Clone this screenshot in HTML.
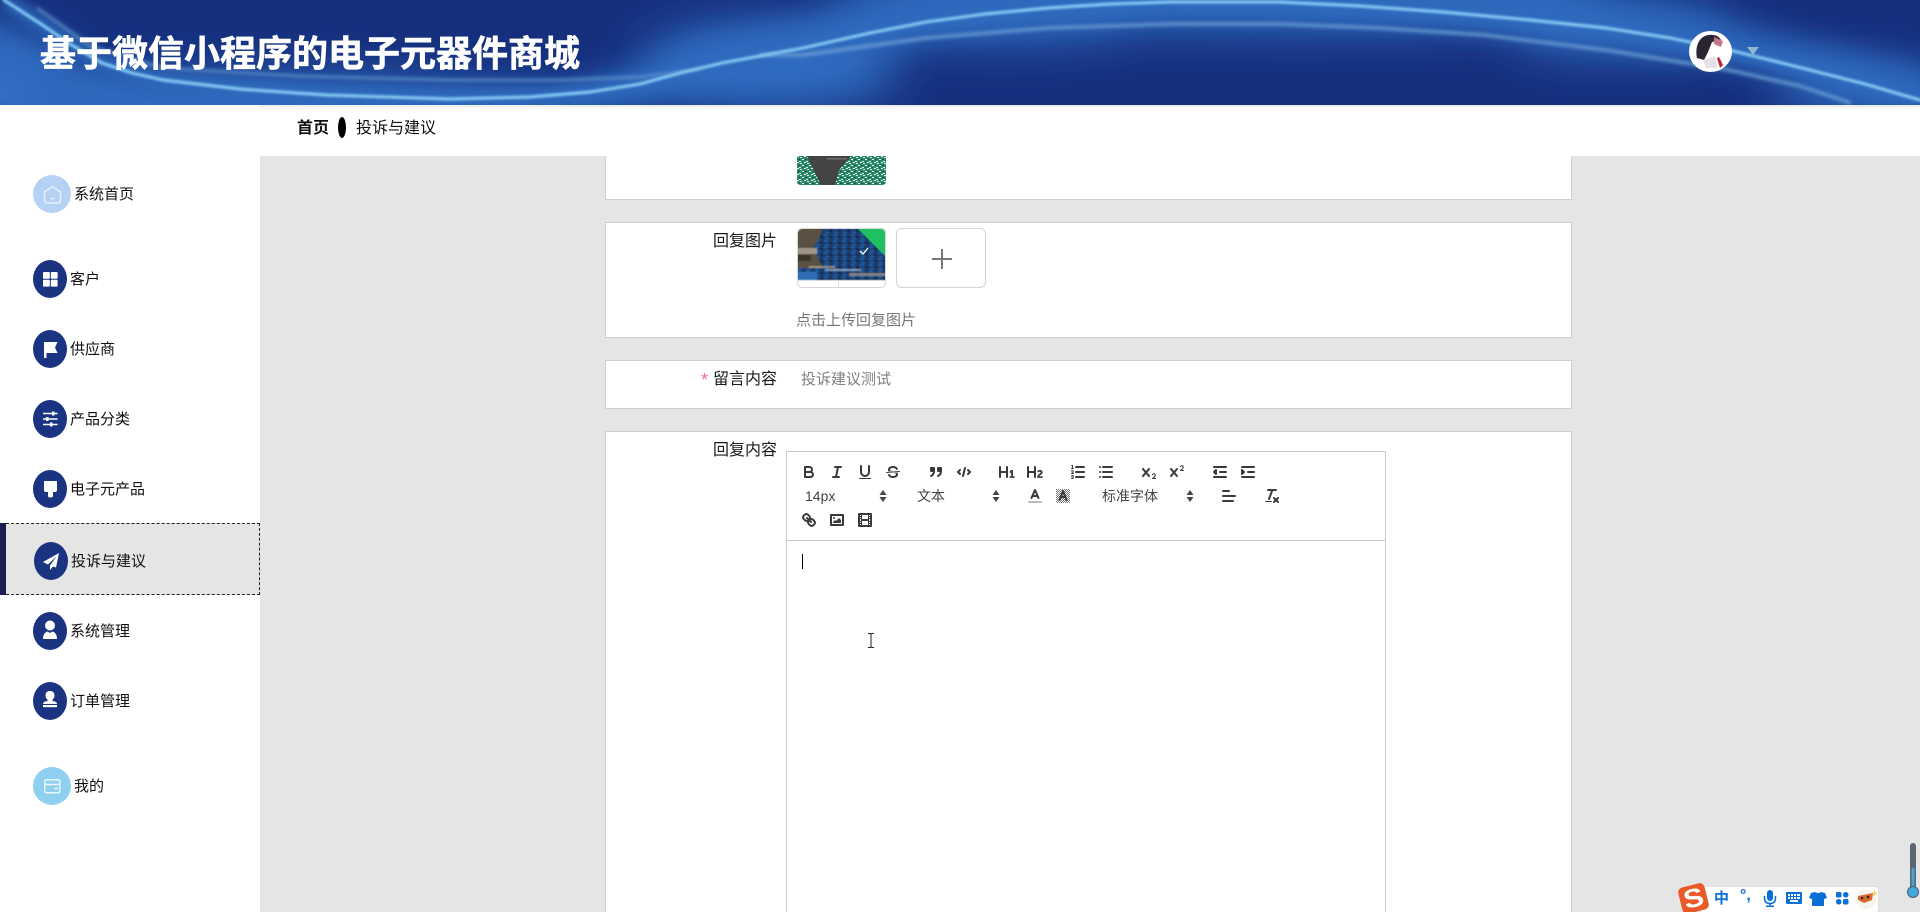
<!DOCTYPE html>
<html lang="zh-CN">
<head>
<meta charset="utf-8">
<title>基于微信小程序的电子元器件商城</title>
<style>
html,body{margin:0;padding:0;width:1920px;height:912px;overflow:hidden;background:#fff}
body{position:relative;font-family:"Liberation Sans","Noto Sans CJK SC",sans-serif;color:#111}
.a{position:absolute}
.t{position:absolute;white-space:nowrap;line-height:20px;height:20px}
.side{font-size:15px;color:#111}
.lab{font-size:16px;color:#1a1a1a;left:713px}
.card{position:absolute;left:605px;width:965px;background:#fff;border:1px solid #cfcfcf;box-sizing:content-box}
.q{position:absolute;width:18px;height:18px;fill:none;stroke:#3a3a3a;stroke-width:2;stroke-linecap:round;stroke-linejoin:round}
.q .f{fill:#3a3a3a;stroke:none}
.q .n{stroke-width:1}
.q .fs{fill:#3a3a3a}
.pick{position:absolute;font-size:14px;line-height:20px;color:#444;white-space:nowrap}
</style>
</head>
<body>

<!-- header -->
<svg class="a" style="left:0;top:0" width="1920" height="105" viewBox="0 0 1920 105">
<defs>
<filter id="b40" filterUnits="userSpaceOnUse" x="-300" y="-300" width="2520" height="705"><feGaussianBlur stdDeviation="24"/></filter>
<filter id="b30" filterUnits="userSpaceOnUse" x="-200" y="-200" width="2320" height="505"><feGaussianBlur stdDeviation="15"/></filter>
<filter id="b8" filterUnits="userSpaceOnUse" x="-200" y="-200" width="2320" height="505"><feGaussianBlur stdDeviation="6"/></filter>
<filter id="b1" filterUnits="userSpaceOnUse" x="-200" y="-200" width="2320" height="505"><feGaussianBlur stdDeviation="1"/></filter>
<filter id="b2" filterUnits="userSpaceOnUse" x="-200" y="-200" width="2320" height="505"><feGaussianBlur stdDeviation="1.500"/></filter>
</defs>
<rect width="1920" height="105" fill="#162f7d"/>
<g filter="url(#b40)" fill="#3170c6">
<ellipse cx="230" cy="112" rx="330" ry="34"/>
<ellipse cx="-10" cy="70" rx="70" ry="40"/>
<ellipse cx="770" cy="66" rx="130" ry="42"/>
<ellipse cx="1000" cy="10" rx="170" ry="30"/>
<ellipse cx="1300" cy="-2" rx="300" ry="30"/>
<ellipse cx="1620" cy="30" rx="110" ry="22"/>
<ellipse cx="1860" cy="92" rx="90" ry="22"/>
</g>
<polyline filter="url(#b30)" fill="none" stroke="#2f6ac0" stroke-width="36" stroke-linejoin="round" points="-40,40 60,82 163,108 326,118 449,118 560,108 640,86 722,60 803,42 926,12 1048,-2 1170,-8 1280,-8 1443,2 1606,20 1729,42 1810,62 1940,98"/>
<polyline filter="url(#b8)" fill="none" stroke="#2f6abd" stroke-width="14" stroke-linejoin="round" points="4,0 41,24 102,63 163,80 326,95 449,99 530,97 640,84 722,63 803,48 926,22 1048,8 1170,2 1280,2 1443,12 1606,28 1729,50 1810,70 1920,100"/>
<polyline filter="url(#b2)" fill="none" stroke="#6b9fd3" stroke-opacity=".65" stroke-width="3" stroke-linejoin="round" points="37,8 90,46 163,68 300,76 449,80 560,80 640,77 700,69"/>
<polyline filter="url(#b2)" fill="none" stroke="#6fa2d6" stroke-opacity=".75" stroke-width="4" stroke-linejoin="round" points="760,55 803,55 926,38 1048,28 1170,24 1280,24 1380,28 1484,35 1606,50 1729,70 1800,86 1851,103"/>
<polyline filter="url(#b1)" fill="none" stroke="#7fc4f0" stroke-width="3.400" stroke-linecap="round" stroke-linejoin="round" points="4,0 24,13 41,24 70,44 102,63 132,73 163,80 240,89 326,95 449,99 530,97 590,92 640,84 680,73 722,63 803,48 870,33 926,22 985,14 1048,8 1110,4 1170,2 1280,2 1360,6 1443,12 1530,20 1606,28 1670,38 1729,50 1770,60 1810,70 1865,84 1920,100"/>
<polygon points="1747,47 1759,47 1753,55" fill="#8cb6d2"/>
<ellipse cx="1710.500" cy="51.500" rx="21.500" ry="20.500" fill="#fff"/>
<path d="M1697,58 C1695,48 1698,37 1708,35 C1714,34 1719,36 1721,40 L1712,42 L1708,52 L1704,60Z" fill="#2a2530"/>
<path d="M1714,37 L1723,41 L1721,47 L1714,44Z" fill="#c9768a"/>
<path d="M1717,58 L1720,68 L1723,65 L1719,57Z" fill="#c22030"/>
<path d="M1703,60 L1715,56 L1717,68 L1706,68Z" fill="#e6e1e6"/>
</svg>
<div class="t" style="left:40px;top:32px;height:44px;line-height:44px;font-size:36px;font-weight:700;color:#fff;-webkit-text-stroke:.6px #fff">基于微信小程序的电子元器件商城</div>

<!-- sidebar / breadcrumb / main -->
<div class="a" style="left:0;top:105px;width:260px;height:807px;background:#fff"></div>
<div class="a" style="left:260px;top:105px;width:1660px;height:51px;background:#fff"></div>
<div class="a" style="left:260px;top:105px;width:1660px;height:4px;background:linear-gradient(#e8e9ee,#fff)"></div>
<div class="a" style="left:260px;top:156px;width:1660px;height:756px;background:#e5e5e5"></div>

<div class="t" style="left:297px;top:119px;font-size:16px;font-weight:700;color:#111">首页</div>
<div class="a" style="left:338px;top:117px;width:8px;height:21px;border-radius:50%;background:#000"></div>
<div class="t" style="left:356px;top:119px;font-size:16px;color:#111">投诉与建议</div>

<!-- active item -->
<div class="a" style="left:0;top:523px;width:6px;height:72px;background:#1a1f4e"></div>
<div class="a" style="left:6px;top:523px;width:254px;height:72px;box-sizing:border-box;background:#e5e6e3;border:1px dashed #222;border-left:none"></div>

<!-- sidebar circles and icons -->
<svg class="a" style="left:0;top:160px" width="260" height="660" viewBox="0 160 260 660">
<circle cx="52" cy="194" r="19" fill="#b5d1f3"/>
<path d="M44.500,192 L52.500,186.500 L60.500,192 V200 Q60.500,203 57.500,203 H47.500 Q44.500,203 44.500,200Z" fill="none" stroke="#e6f0fc" stroke-width="1.500"/>
<path d="M50.500,198.500 H54.500" stroke="#e6f0fc" stroke-width="1.500"/>

<ellipse cx="50" cy="279" rx="17" ry="19" fill="#1a3482"/>
<g fill="#fff"><rect x="43" y="272" width="6.800" height="6.800" rx=".8"/><rect x="50.800" y="272" width="6.800" height="6.800" rx=".8"/><rect x="43" y="279.800" width="6.800" height="6.800" rx=".8"/><rect x="50.800" y="279.800" width="6.800" height="6.800" rx=".8"/></g>

<ellipse cx="50" cy="349" rx="17" ry="19" fill="#1a3482"/>
<path d="M44,342 H57.500 L55,347.500 L57.500,353 H46.500 V358 H44Z" fill="#fff"/>

<ellipse cx="50" cy="419" rx="17" ry="19" fill="#1a3482"/>
<g stroke="#fff" stroke-width="1.600"><path d="M43,413.500 H57.500 M43,419 H57.500 M43,424.500 H57.500"/></g>
<g fill="#fff"><rect x="52" y="411.500" width="2.500" height="4"/><rect x="46" y="417" width="2.500" height="4"/><rect x="50" y="422.500" width="2.500" height="4"/></g>

<ellipse cx="50" cy="489" rx="17" ry="19" fill="#1a3482"/>
<path d="M44,481 H57 V490 Q57,492 55,492 H53 V496 Q53,497.500 50.500,497.500 Q48,497.500 48,496 V492 H46 Q44,492 44,490Z" fill="#fff"/>

<ellipse cx="51" cy="561" rx="17" ry="19" fill="#1a3482"/>
<path d="M59,553 L43,562 L48,564.500 L56.500,556.500 L50,565.500 V570 L53,566.500 L56,567.500Z" fill="#fff"/>

<ellipse cx="50" cy="631" rx="17" ry="19" fill="#1a3482"/>
<circle cx="50" cy="625.500" r="5" fill="#fff"/>
<path d="M43,639 Q43,633 47.500,631.500 L50,633 L52.500,631.500 Q57,633 57,639Z" fill="#fff"/>

<ellipse cx="50" cy="701" rx="17" ry="19" fill="#1a3482"/>
<path d="M50,691 Q54.500,691 54.500,695.500 Q54.500,698 52.500,699.500 V701 Q57,701.500 57,704 H43 Q43,701.500 47.500,701 V699.500 Q45.500,698 45.500,695.500 Q45.500,691 50,691Z" fill="#fff"/>
<rect x="43" y="705" width="14" height="2.200" fill="#fff"/>

<circle cx="52" cy="786" r="19" fill="#8fd0f0"/>
<rect x="44.800" y="779.800" width="15" height="13" rx="1.500" fill="none" stroke="#e9f6fd" stroke-width="1.500"/>
<path d="M44.800,784.500 H59.800 M54,788.500 H58" stroke="#e9f6fd" stroke-width="1.500"/>
</svg>

<div class="t side" style="left:74px;top:185px">系统首页</div>
<div class="t side" style="left:70px;top:270px">客户</div>
<div class="t side" style="left:70px;top:340px">供应商</div>
<div class="t side" style="left:70px;top:410px">产品分类</div>
<div class="t side" style="left:70px;top:480px">电子元产品</div>
<div class="t side" style="left:71px;top:552px">投诉与建议</div>
<div class="t side" style="left:70px;top:622px">系统管理</div>
<div class="t side" style="left:70px;top:692px">订单管理</div>
<div class="t side" style="left:74px;top:777px">我的</div>

<!-- cards -->
<div class="card" style="top:156px;height:43px;border-top:none"></div>
<div class="card" style="top:222px;height:114px"></div>
<div class="card" style="top:360px;height:47px"></div>
<div class="card" style="top:431px;height:490px"></div>

<!-- image one -->
<svg class="a" style="left:797px;top:156px" width="89" height="29" viewBox="0 0 89 29">
<defs>
<pattern id="noise" width="7" height="6" patternUnits="userSpaceOnUse">
<rect width="7" height="6" fill="#2b8a6c"/>
<rect x="0" y="0" width="2" height="1" fill="#e6f2ec"/><rect x="3" y="1" width="2" height="1" fill="#d6ece2"/><rect x="5" y="3" width="2" height="1" fill="#fff"/><rect x="1" y="3" width="2" height="1" fill="#0f5a45"/><rect x="2" y="5" width="2" height="1" fill="#e6f2ec"/><rect x="5" y="5" width="1" height="1" fill="#0f5a45"/>
</pattern>
<clipPath id="c1"><path d="M0,0 H89 V25 Q89,29 85,29 H4 Q0,29 0,25Z"/></clipPath>
</defs>
<g clip-path="url(#c1)">
<rect width="89" height="29" fill="url(#noise)"/>
<polygon points="10,0 54,0 42,14 38,29 24,29" fill="#444444"/>
<rect x="30" y="2" width="20" height="1.500" fill="#8b8b8b" opacity=".6"/>
</g>
</svg>

<!-- image two -->
<svg class="a" style="left:797px;top:228px" width="89" height="60" viewBox="0 0 89 60">
<defs>
<pattern id="blue" width="9" height="6" patternUnits="userSpaceOnUse">
<rect width="9" height="6" fill="#1c3c6a"/>
<rect x="0" y="0" width="4" height="2" fill="#1b5ea8"/><rect x="5" y="2" width="3" height="2" fill="#16294a"/><rect x="1" y="4" width="4" height="1" fill="#2268b8"/>
</pattern>
<clipPath id="c2"><rect width="89" height="60" rx="5"/></clipPath>
<filter id="soft2" x="-5%" y="-5%" width="110%" height="110%"><feGaussianBlur stdDeviation=".6"/></filter>
</defs>
<g clip-path="url(#c2)">
<rect width="89" height="60" fill="#fff"/>
<g filter="url(#soft2)">
<rect width="89" height="52" fill="url(#blue)"/>
<path d="M0,0 H26 L22,10 L16,20 L26,40 H0Z" fill="#5a5142"/>
<rect x="0" y="20" width="20" height="6" fill="#a09585"/>
<rect x="0" y="27" width="14" height="6" fill="#3b352c"/>
<rect x="12" y="38" width="26" height="2" fill="#b9ab90" opacity=".7"/>
<rect x="28" y="41" width="36" height="2" fill="#a5b4c4" opacity=".7"/>
<rect x="0" y="44" width="20" height="8" fill="#2d6db5"/>
<rect x="52" y="45" width="37" height="3" fill="#a59a8c" opacity=".7"/>
</g>
<polygon points="60,0 89,0 89,29" fill="#1fbf62"/>
<path d="M63,23 L66,26 L71,20" fill="none" stroke="#fff" stroke-width="1.300"/>
<rect x="41" y="52" width="1" height="8" fill="#ddd"/>
</g>
<rect x=".5" y=".5" width="88" height="59" rx="5" fill="none" stroke="#d8d8d8"/>
</svg>

<!-- add box -->
<div class="a" style="left:896px;top:228px;width:90px;height:60px;box-sizing:border-box;border:1px solid #d4d4d4;border-radius:6px;background:#fff"></div>
<div class="a" style="left:932px;top:258px;width:20px;height:1.500px;background:#777"></div>
<div class="a" style="left:941px;top:249px;width:1.500px;height:20px;background:#777"></div>

<div class="t lab" style="top:232px">回复图片</div>
<div class="t" style="left:796px;top:311px;font-size:15px;color:#777">点击上传回复图片</div>
<div class="t" style="left:701px;top:370px;font-size:18px;color:#f56c8c">*</div>
<div class="t lab" style="top:370px">留言内容</div>
<div class="t" style="left:801px;top:370px;font-size:15px;color:#808080">投诉建议测试</div>
<div class="t lab" style="top:441px">回复内容</div>

<!-- editor -->
<div class="a" style="left:786px;top:451px;width:600px;height:90px;box-sizing:border-box;border:1px solid #ccc;background:#fff"></div>
<div class="a" style="left:786px;top:540px;width:600px;height:380px;box-sizing:border-box;border:1px solid #ccc;background:#fff"></div>
<div class="a" style="left:802px;top:554px;width:1px;height:15px;background:#000"></div>

<!-- row 1 -->
<svg class="q" style="left:800px;top:463px" viewBox="0 0 18 18"><path d="M5,4H9.5A2.5,2.5,0,0,1,12,6.5v0A2.5,2.5,0,0,1,9.5,9H5A0,0,0,0,1,5,9V4A0,0,0,0,1,5,4Z"/><path d="M5,9h5.5A2.5,2.5,0,0,1,13,11.5v0A2.5,2.5,0,0,1,10.5,14H5a0,0,0,0,1,0,0V9A0,0,0,0,1,5,9Z"/></svg>
<svg class="q" style="left:828px;top:463px" viewBox="0 0 18 18"><line x1="7" x2="13" y1="4" y2="4"/><line x1="5" x2="11" y1="14" y2="14"/><line x1="8" x2="10" y1="14" y2="4"/></svg>
<svg class="q" style="left:856px;top:463px" viewBox="0 0 18 18"><path d="M5,3V9a4.012,4.012,0,0,0,4,4H9a4.012,4.012,0,0,0,4-4V3"/><rect class="f" height="1" rx="0.5" ry="0.5" width="12" x="3" y="15"/></svg>
<svg class="q" style="left:884px;top:463px" viewBox="0 0 18 18"><line class="n" x1="15.5" x2="2.5" y1="8.5" y2="9.5"/><path class="f" d="M9.007,8C6.542,7.791,6,7.519,6,6.5,6,5.792,7.283,5,9,5c1.571,0,2.765.679,2.969,1.309a1,1,0,0,0,1.9-.617C13.356,4.106,11.354,3,9,3,6.2,3,4,4.538,4,6.5a3.2,3.2,0,0,0,.5,1.843Z"/><path class="f" d="M8.984,10C11.457,10.208,12,10.479,12,11.5c0,.708-1.283,1.5-3,1.5-1.571,0-2.765-.679-2.969-1.309a1,1,0,1,0-1.9.617C4.644,13.894,6.646,15,9,15c2.8,0,5-1.538,5-3.5a3.2,3.2,0,0,0-.5-1.843Z"/></svg>
<svg class="q" style="left:927px;top:463px" viewBox="0 0 18 18"><rect class="fs" height="3" width="3" x="4" y="5"/><rect class="fs" height="3" width="3" x="11" y="5"/><path d="M7,8c0,4.031-3,5-3,5"/><path d="M14,8c0,4.031-3,5-3,5"/></svg>
<svg class="q" style="left:955px;top:463px" viewBox="0 0 18 18"><polyline points="5 7 3 9 5 11"/><polyline points="13 7 15 9 13 11"/><line x1="10" x2="8" y1="5" y2="13"/></svg>
<svg class="q" style="left:998px;top:463px" viewBox="0 0 18 18"><path class="f" d="M10,4V14a1,1,0,0,1-2,0V10H3v4a1,1,0,0,1-2,0V4A1,1,0,0,1,3,4V8H8V4a1,1,0,0,1,2,0Zm6.06787,9.209H14.98975V7.59863a.54085.54085,0,0,0-.605-.60547h-.62744a1.01119,1.01119,0,0,0-.748.29688L11.645,8.56641a.5435.5435,0,0,0-.022.8584l.28613.30762a.53861.53861,0,0,0,.84717.0332l.09912-.08789a1.2137,1.2137,0,0,0,.2417-.35254h.02246s-.01123.30859-.01123.60547V13.209H12.041a.54085.54085,0,0,0-.605.60547v.43945a.54085.54085,0,0,0,.605.60547h4.02686a.54085.54085,0,0,0,.605-.60547v-.43945A.54085.54085,0,0,0,16.06787,13.209Z"/></svg>
<svg class="q" style="left:1026px;top:463px" viewBox="0 0 18 18"><path class="f" d="M16.73975,13.81445v.43945a.54085.54085,0,0,1-.605.60547H11.855a.58392.58392,0,0,1-.64893-.60547V14.0127c0-2.90527,3.39941-3.42187,3.39941-4.55469a.77675.77675,0,0,0-.84717-.78125,1.17684,1.17684,0,0,0-.83594.38477c-.2749.26367-.561.374-.85791.13184l-.4292-.34082c-.30811-.24219-.38525-.51758-.1543-.81445a2.97155,2.97155,0,0,1,2.45361-1.17676,2.45393,2.45393,0,0,1,2.68408,2.40918c0,2.45312-3.1792,2.92676-3.27832,3.93848h2.79443A.54085.54085,0,0,1,16.73975,13.81445ZM9,3A.99974.99974,0,0,0,8,4V8H3V4A1,1,0,0,0,1,4V14a1,1,0,0,0,2,0V10H8v4a1,1,0,0,0,2,0V4A.99974.99974,0,0,0,9,3Z"/></svg>
<svg class="q" style="left:1069px;top:463px" viewBox="0 0 18 18"><line x1="7" x2="15" y1="4" y2="4"/><line x1="7" x2="15" y1="9" y2="9"/><line x1="7" x2="15" y1="14" y2="14"/><line class="n" x1="2.5" x2="4.5" y1="5.5" y2="5.5"/><path class="f" d="M3.5,6A0.5,0.5,0,0,1,3,5.5V3.085l-0.276.138A0.5,0.5,0,0,1,2.053,3c-0.124-.247-0.023-0.324.224-0.447l1-.5A0.5,0.5,0,0,1,4,2.5v3A0.5,0.5,0,0,1,3.5,6Z"/><path class="n" d="M4.5,10.5h-2c0-.234,1.85-1.076,1.85-2.234A0.959,0.959,0,0,0,2.5,8.156"/><path class="n" d="M2.5,14.846a0.959,0.959,0,0,0,1.85-.109A0.7,0.7,0,0,0,3.75,14a0.688,0.688,0,0,0,.6-0.736,0.959,0.959,0,0,0-1.85-.109"/></svg>
<svg class="q" style="left:1097px;top:463px" viewBox="0 0 18 18"><line x1="6" x2="15" y1="4" y2="4"/><line x1="6" x2="15" y1="9" y2="9"/><line x1="6" x2="15" y1="14" y2="14"/><line x1="3" x2="3" y1="4" y2="4"/><line x1="3" x2="3" y1="9" y2="9"/><line x1="3" x2="3" y1="14" y2="14"/></svg>
<svg class="q" style="left:1140px;top:463px" viewBox="0 0 18 18"><path class="f" d="M15.5,15H13.861a3.858,3.858,0,0,0,1.914-2.975,1.8,1.8,0,0,0-1.6-1.751A1.921,1.921,0,0,0,12.021,11.7a0.50013,0.50013,0,1,0,.957.291h0a0.914,0.914,0,0,1,1.053-.725,0.81,0.81,0,0,1,.744.762c0,1.076-1.16971,1.86982-1.93971,2.43082A1.45639,1.45639,0,0,0,12,15.5a0.5,0.5,0,0,0,.5.5h3A0.5,0.5,0,0,0,15.5,15Z"/><path class="f" d="M9.65,5.241a1,1,0,0,0-1.409.108L6,7.964,3.759,5.349A1,1,0,0,0,2.192,6.59178Q2.21541,6.6213,2.241,6.649L4.684,9.5,2.241,12.35A1,1,0,0,0,3.71,13.70722q0.02557-.02768.049-0.05722L6,11.036,8.241,13.65a1,1,0,1,0,1.567-1.24277Q9.78459,12.3777,9.759,12.35L7.316,9.5,9.759,6.651A1,1,0,0,0,9.65,5.241Z"/></svg>
<svg class="q" style="left:1168px;top:463px" viewBox="0 0 18 18"><path class="f" d="M15.5,7H13.861a4.015,4.015,0,0,0,1.914-2.975,1.8,1.8,0,0,0-1.6-1.751A1.922,1.922,0,0,0,12.021,3.7a0.5,0.5,0,1,0,.957.291,0.917,0.917,0,0,1,1.053-.725,0.81,0.81,0,0,1,.744.762c0,1.077-1.164,1.925-1.934,2.486A1.423,1.423,0,0,0,12,7.5a0.5,0.5,0,0,0,.5.5h3A0.5,0.5,0,0,0,15.5,7Z"/><path class="f" d="M9.651,5.241a1,1,0,0,0-1.41.108L6,7.964,3.759,5.349a1,1,0,1,0-1.519,1.3L4.683,9.5,2.241,12.35a1,1,0,1,0,1.519,1.3L6,11.036l2.241,2.615a1,1,0,0,0,1.519-1.3L7.317,9.5,9.759,6.651A1,1,0,0,0,9.651,5.241Z"/></svg>
<svg class="q" style="left:1211px;top:463px" viewBox="0 0 18 18"><line x1="3" x2="15" y1="14" y2="14"/><line x1="3" x2="15" y1="4" y2="4"/><line x1="9" x2="15" y1="9" y2="9"/><polyline class="fs" points="5 7 5 11 3 9 5 7"/></svg>
<svg class="q" style="left:1239px;top:463px" viewBox="0 0 18 18"><line x1="3" x2="15" y1="14" y2="14"/><line x1="3" x2="15" y1="4" y2="4"/><line x1="9" x2="15" y1="9" y2="9"/><polyline class="fs" points="3 7 3 11 5 9 3 7"/></svg>

<!-- row 2 -->
<div class="pick" style="left:805px;top:486px;font-size:14px">14px</div>
<svg class="a" style="left:879px;top:490px" width="8" height="12" viewBox="0 0 8 12"><path d="M4,0 L7.500,5 H.5Z M4,12 L7.500,7 H.5Z" fill="#444"/></svg>
<div class="pick" style="left:917px;top:486px">文本</div>
<svg class="a" style="left:992px;top:490px" width="8" height="12" viewBox="0 0 8 12"><path d="M4,0 L7.500,5 H.5Z M4,12 L7.500,7 H.5Z" fill="#444"/></svg>
<svg class="q" style="left:1026px;top:487px" viewBox="0 0 18 18"><line x1="3" x2="15" y1="15" y2="15" style="stroke:#bbb"/><polyline points="5.5 11 9 3 12.5 11"/><line x1="11.63" x2="6.38" y1="9" y2="9"/></svg>
<svg class="q" style="left:1054px;top:487px" viewBox="0 0 18 18"><defs><pattern id="hatch" width="2" height="2" patternUnits="userSpaceOnUse"><rect width="1" height="1" fill="#777" stroke="none"/><rect x="1" y="1" width="1" height="1" fill="#777" stroke="none"/></pattern></defs><rect x="2" y="2" width="14" height="14" fill="url(#hatch)" stroke="none"/><polyline points="5.5 13 9 4 12.5 13"/><rect x="6" y="9" width="6" height="2" class="f"/></svg>
<div class="pick" style="left:1102px;top:486px">标准字体</div>
<svg class="a" style="left:1186px;top:490px" width="8" height="12" viewBox="0 0 8 12"><path d="M4,0 L7.500,5 H.5Z M4,12 L7.500,7 H.5Z" fill="#444"/></svg>
<svg class="q" style="left:1220px;top:487px" viewBox="0 0 18 18"><line x1="3" x2="15" y1="9" y2="9"/><line x1="3" x2="13" y1="14" y2="14"/><line x1="3" x2="9" y1="4" y2="4"/></svg>
<svg class="q" style="left:1263px;top:487px" viewBox="0 0 18 18"><line x1="5" x2="13" y1="3" y2="3"/><line x1="6" x2="9.35" y1="12" y2="3"/><line x1="11" x2="15" y1="11" y2="15"/><line x1="15" x2="11" y1="11" y2="15"/><rect class="f" height="1" rx="0.5" ry="0.5" width="7" x="2" y="14"/></svg>

<!-- row 3 -->
<svg class="q" style="left:800px;top:511px" viewBox="0 0 18 18"><line x1="7" x2="11" y1="7" y2="11"/><path d="M8.9,4.577a3.476,3.476,0,0,1,.36,4.679A3.476,3.476,0,0,1,4.577,8.9C3.185,7.5,2.035,6.4,4.217,4.217S7.5,3.185,8.9,4.577Z"/><path d="M13.423,9.1a3.476,3.476,0,0,0-4.679-.36,3.476,3.476,0,0,0,.36,4.679c1.392,1.392,2.5,2.542,4.679.36S14.815,10.5,13.423,9.1Z"/></svg>
<svg class="q" style="left:828px;top:511px" viewBox="0 0 18 18"><rect height="10" width="12" x="3" y="4"/><circle class="f" cx="6" cy="7" r="1"/><polyline class="f" points="5 12 5 11 7 9 8 10 11 7 13 9 13 12 5 12"/></svg>
<svg class="q" style="left:856px;top:511px" viewBox="0 0 18 18"><rect height="12" width="12" x="3" y="3"/><rect class="f" height="12" width="1" x="5" y="3"/><rect class="f" height="12" width="1" x="12" y="3"/><rect class="f" height="2" width="8" x="5" y="8"/><rect class="f" height="1" width="3" x="3" y="5"/><rect class="f" height="1" width="3" x="3" y="7"/><rect class="f" height="1" width="3" x="3" y="10"/><rect class="f" height="1" width="3" x="3" y="12"/><rect class="f" height="1" width="3" x="12" y="5"/><rect class="f" height="1" width="3" x="12" y="7"/><rect class="f" height="1" width="3" x="12" y="10"/><rect class="f" height="1" width="3" x="12" y="12"/></svg>

<!-- mouse I-beam -->
<svg class="a" style="left:866px;top:632px" width="10" height="17" viewBox="0 0 10 17"><path d="M2,1.500 H4 Q5,1.500 5,3 V14 Q5,15.500 4,15.500 H2 M8,1.500 H6 Q5,1.500 5,3 M8,15.500 H6 Q5,15.500 5,14" fill="none" stroke="#222" stroke-width="1"/></svg>

<!-- IME bar -->
<div class="a" style="left:1700px;top:887px;width:178px;height:25px;background:#fff;border-radius:2px;box-shadow:0 0 1px #bbb"></div>
<div class="a" style="left:1680px;top:885px;width:27px;height:27px;background:#ea5a28;border-radius:5px;transform:rotate(-14deg)"></div>
<div class="t" style="left:1680px;top:884px;width:27px;height:28px;line-height:28px;text-align:center;font-size:26px;font-weight:700;color:#fff;transform:rotate(-14deg) scaleX(1.150)">S</div>
<div class="t" style="left:1714px;top:889px;font-size:15px;font-weight:700;color:#0a6fd6">中</div>
<div class="t" style="left:1740px;top:886px;font-size:16px;font-weight:700;color:#0a6fd6">°,</div>
<svg class="a" style="left:1760px;top:890px" width="120" height="20" viewBox="1760 890 120 20">
<g fill="#0a6fd6">
<rect x="1767" y="890" width="6" height="11" rx="3"/>
<path d="M1764.500,896 V898 Q1764.500,903.500 1770,903.500 Q1775.500,903.500 1775.500,898 V896" fill="none" stroke="#0a6fd6" stroke-width="1.500"/>
<rect x="1769.300" y="903" width="1.500" height="3"/><rect x="1766" y="905.500" width="8" height="1.500"/>
<path d="M1787,892 H1801 Q1802,892 1802,893 V903 Q1802,904 1801,904 H1787 Q1786,904 1786,903 V893 Q1786,892 1787,892Z M1788,894 V896 H1790 V894Z M1791,894 V896 H1793 V894Z M1794,894 V896 H1796 V894Z M1797,894 V896 H1800 V894Z M1788,897 V899 H1790 V897Z M1791,897 V899 H1793 V897Z M1794,897 V899 H1796 V897Z M1797,897 V899 H1800 V897Z M1790,900 V902 H1798 V900Z" fill-rule="evenodd"/>
<path d="M1811,893 L1815,892 Q1818,894 1821,892 L1825,893 L1827,898 L1824,899 V906 H1812 V899 L1809,898Z"/>
<rect x="1836" y="892" width="5.500" height="5.500" rx="1.500"/><rect x="1843" y="892" width="5.500" height="5.500" rx="2.700"/><rect x="1836" y="899" width="5.500" height="5.500" rx="2.700"/><rect x="1843" y="899" width="5.500" height="5.500" rx="1.500"/>
</g>
<circle cx="1866" cy="899" r="10" fill="#f6f3ee"/>
<path d="M1858,896 L1873,893 L1872,900 L1864,903 L1858,900Z" fill="#d8692d"/>
<circle cx="1862" cy="898" r="1.300" fill="#222"/><circle cx="1868" cy="897" r="1.300" fill="#222"/>
<path d="M1874,889 L1877,894 L1873,896Z" fill="#f3d768"/>
</svg>

<!-- thermometer -->
<svg class="a" style="left:1905px;top:840px" width="15" height="62" viewBox="0 0 15 62">
<rect x="5" y="3" width="6" height="46" rx="3" fill="#5b6670"/>
<rect x="6.500" y="28" width="3" height="20" fill="#4aa3d4"/>
<circle cx="8" cy="52" r="5.500" fill="#3fa9dc" stroke="#4f5c68" stroke-width="1"/>
</svg>

</body>
</html>
